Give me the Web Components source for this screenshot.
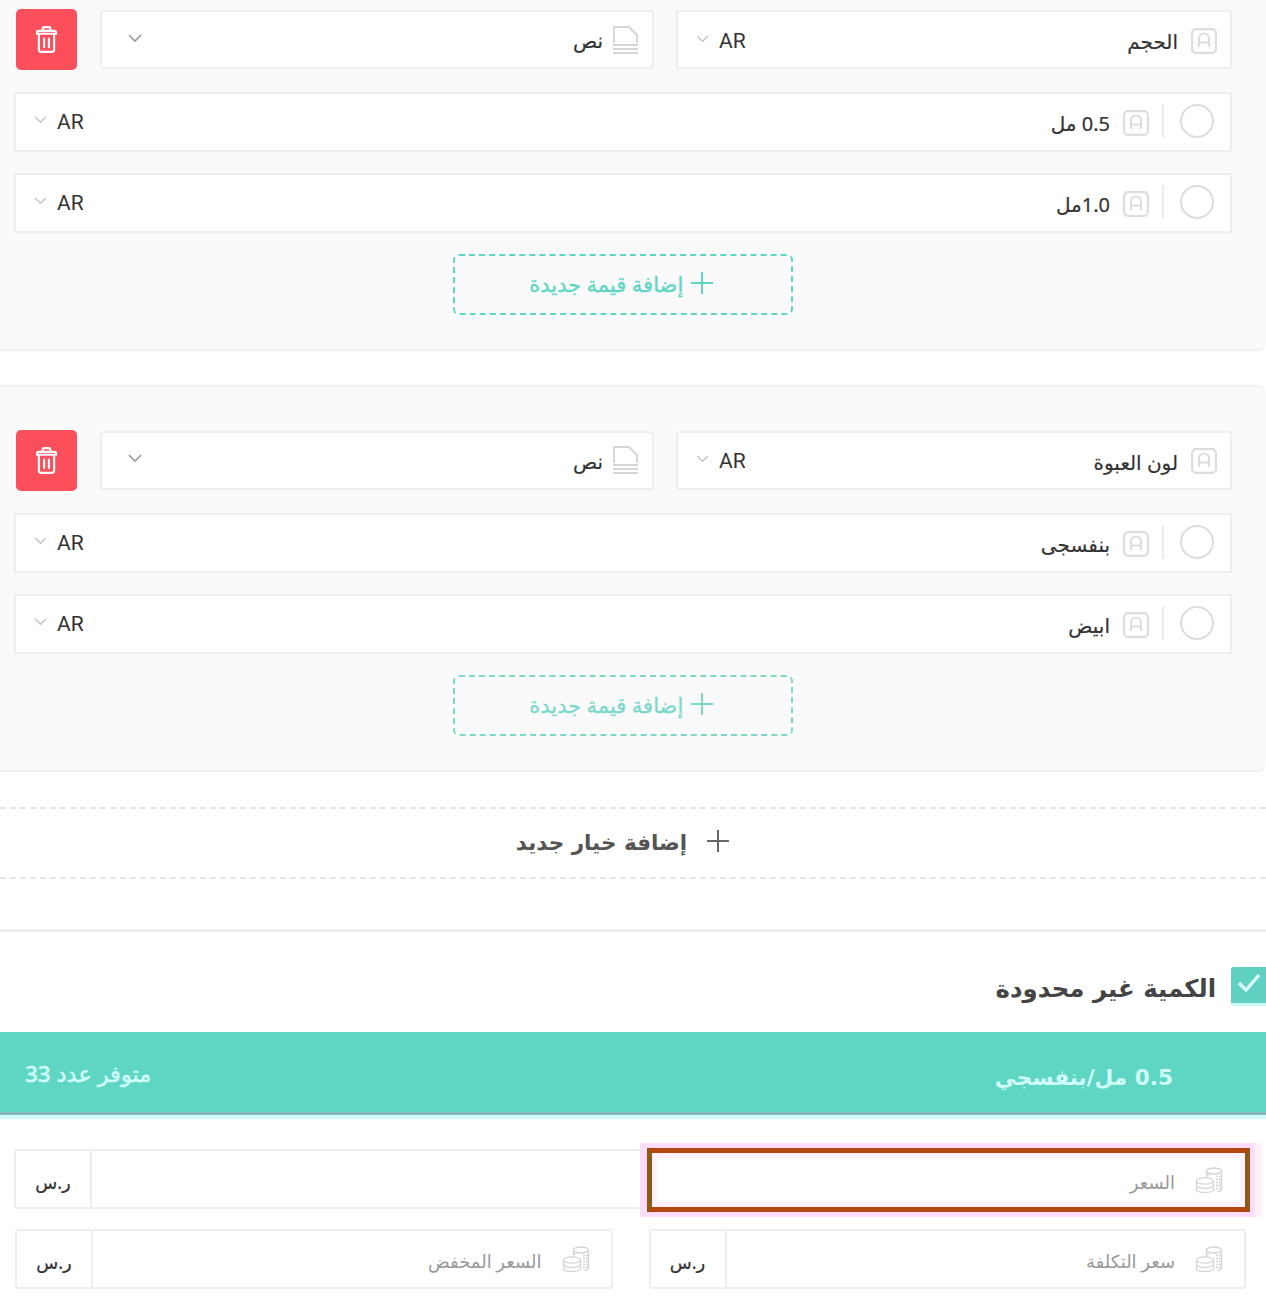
<!DOCTYPE html>
<html lang="ar" dir="rtl">
<head>
<meta charset="utf-8">
<title>خيارات المنتج</title>
<style>
  html, body { margin: 0; background: #fff; overflow: hidden; }
  body { font-family: "DejaVu Sans", "Noto Sans", sans-serif; color: #333; }
</style>
</head>
<body>
<product-options></product-options>

<script>
const FONT = `"Noto Sans", "DejaVu Sans", sans-serif`;
const HEAVY = `"DejaVu Sans", "Noto Sans", sans-serif`;
const LATIN = `Roboto, "Noto Sans", sans-serif`;

const ICONS = {
  letter: `<svg viewBox="0 0 26 26" fill="none" stroke="currentColor" stroke-width="2.200">
      <rect x="1.100" y="1.100" width="23.800" height="23.800" rx="4"/>
      <path d="M8 19V10.500a5 5 0 0 1 10 0V19M8 14.500h10"/></svg>`,
  file: `<svg viewBox="0 0 25 28" fill="none" stroke="currentColor" stroke-width="2">
      <path d="M1 17V1h15l8 8v8"/>
      <path d="M0 19h25M0 23h25M0 27h25"/></svg>`,
  chevron: `<svg viewBox="0 0 14 9" fill="none" stroke="currentColor" stroke-width="1.600">
      <path d="M1 1l6 6 6-6"/></svg>`,
  trash: `<svg viewBox="0 0 22 28" fill="none" stroke="currentColor" stroke-width="2.200" stroke-linecap="round" stroke-linejoin="round">
      <path d="M7 5V2.500A1.500 1.500 0 0 1 8.500 1h5A1.500 1.500 0 0 1 15 2.500V5"/>
      <path d="M1 6.500Q1 5 2.500 5h17Q21 5 21 6.500V8H1z"/>
      <path d="M3 8v16.500A2.500 2.500 0 0 0 5.500 27h11a2.500 2.500 0 0 0 2.500-2.500V8"/>
      <path d="M8.500 13v9M13.500 13v9"/></svg>`,
  plus: `<svg viewBox="0 0 22 22" fill="none" stroke="currentColor" stroke-width="2">
      <path d="M11 0v22M0 11h22"/></svg>`,
  check: `<svg viewBox="0 0 24 20" fill="none" stroke="currentColor" stroke-width="3.400">
      <path d="M2 10l7 7L22 2"/></svg>`,
  coins: `<svg viewBox="0 0 28 26" fill="none" stroke="currentColor" stroke-width="1.300">
      <ellipse cx="19" cy="4" rx="7.500" ry="3"/>
      <path d="M11.500 4v7M26.500 4v18q0 2-4 2.500M14 8.500q-1-.5-2.500-1"/>
      <path d="M21 9.500h5.500M21 12.500h5.500M21 15.500h5.500M21 18.500h5.500M21 21.500h5.500" stroke-dasharray="2 1"/>
      <ellipse cx="10" cy="14" rx="8.500" ry="3.200"/>
      <path d="M1.500 14v8.500c0 1.800 3.800 3 8.500 3s8.500-1.200 8.500-3V14"/>
      <path d="M1.500 18.300c0 1.800 3.800 3 8.500 3s8.500-1.200 8.500-3"/></svg>`
};

class UiIcon extends HTMLElement {
  constructor() {
    super();
    this.attachShadow({ mode: 'open' }).innerHTML = `
      <style>
        :host { display: block; flex: none; line-height: 0; }
        svg { display: block; width: 100%; height: 100%; }
      </style>${ICONS[this.getAttribute('name')] || ''}`;
  }
}

const baseText = `:host { font-family: ${FONT}; color: #333; }`;

// language picker on the far side of a white box
class LangSelect extends HTMLElement {
  constructor() {
    super();
    this.attachShadow({ mode: 'open' }).innerHTML = `
      <style>
        :host { display: flex; align-items: center; gap: 10px; flex: none; direction: rtl; }
        span { font: 400 21px ${LATIN}; color: #333; }
        ui-icon { width: 13px; height: 8px; color: #c4c4c4; margin-top: -4px; }
      </style>
      <span>AR</span><ui-icon name="chevron"></ui-icon>`;
  }
}

class NameField extends HTMLElement {
  constructor() {
    super();
    this.attachShadow({ mode: 'open' }).innerHTML = `
      <style>
        ${baseText}
        :host { flex: 1 1 400px; display: flex; align-items: center; box-sizing: border-box; height: 59px; margin-top: 1px;
          background: #fff; border: 2px solid #eee; border-radius: 3px; padding: 0 13px 0 18px; }
        ui-icon.letter { width: 26px; height: 26px; color: #ddd; margin-top: 2px; }
        .text { flex: 1; font-size: 20px; margin-right: 13px; padding-top: 4px; -webkit-text-stroke: .2px currentColor; }
        lang-select { margin-top: 2px; }
      </style>
      <ui-icon class="letter" name="letter"></ui-icon>
      <div class="text"><slot></slot></div>
      <lang-select></lang-select>`;
  }
}

class TypeSelect extends HTMLElement {
  constructor() {
    super();
    this.attachShadow({ mode: 'open' }).innerHTML = `
      <style>
        ${baseText}
        :host { flex: none; width: 554px; display: flex; align-items: center; box-sizing: border-box; height: 59px; margin-top: 1px;
          background: #fff; border: 2px solid #eee; border-radius: 4px; padding: 0 14px 0 26px; }
        ui-icon.file { width: 25px; height: 28px; color: #d6d6d6; }
        .text { flex: 1; font-size: 20px; margin-right: 10px; padding-top: 2px; -webkit-text-stroke: .2px currentColor; }
        ui-icon.chev { width: 14px; height: 9px; color: #9a9a9a; margin-top: -3px; }
      </style>
      <ui-icon class="file" name="file"></ui-icon>
      <div class="text"><slot></slot></div>
      <ui-icon class="chev" name="chevron"></ui-icon>`;
  }
}

class DeleteButton extends HTMLElement {
  constructor() {
    super();
    this.attachShadow({ mode: 'open' }).innerHTML = `
      <style>
        :host { flex: none; display: flex; align-items: center; justify-content: center; margin-right: 1px;
          width: 61px; height: 61px; background: #fb4f5c; border-radius: 5px; color: #fff; }
        ui-icon { width: 21px; height: 27px; }
      </style>
      <ui-icon name="trash"></ui-icon>`;
  }
}

class OptionValue extends HTMLElement {
  constructor() {
    super();
    this.attachShadow({ mode: 'open' }).innerHTML = `
      <style>
        ${baseText}
        :host { display: flex; align-items: center; box-sizing: border-box; height: 60px;
          background: #fff; border: 2px solid #eee; padding: 0 16px 0 18.500px; }
        .radio { width: 34px; height: 34px; box-sizing: border-box; border: 2px solid #ddd; border-radius: 50%; flex: none; margin-top: -2px; }
        .sep { width: 2px; height: 34px; background: #eee; margin: 0 16px 0 0; flex: none; margin-top: -2px; }
        ui-icon.letter { width: 26px; height: 26px; color: #ddd; margin: 2px 13px 0 13px; }
        .text { flex: 1; font-size: 20px; padding-top: 3px; -webkit-text-stroke: .2px currentColor; }
      </style>
      <div class="radio"></div>
      <div class="sep"></div>
      <ui-icon class="letter" name="letter"></ui-icon>
      <div class="text"><slot></slot></div>
      <lang-select></lang-select>`;
  }
}

class AddValue extends HTMLElement {
  constructor() {
    super();
    this.attachShadow({ mode: 'open' }).innerHTML = `
      <style>
        :host { align-self: center; display: flex; align-items: center; justify-content: center; gap: 8px;
          box-sizing: border-box; width: 340px; height: 61px; margin: .6px 0 0 1px; padding-right: 4px;
          border: 2px dashed #5fd5c4; border-radius: 6px;
          color: #5fd5c4; font: 500 21px ${FONT}; -webkit-text-stroke: .35px currentColor; }
        :host([dim]) { color: #7dd8cc; border-color: #7dd8cc; }
        ui-icon { width: 22px; height: 22px; margin-top: -2px; }
      </style>
      <ui-icon name="plus"></ui-icon><span><slot></slot></span>`;
  }
}

// one product option: header row, its values and the add button
class OptionCard extends HTMLElement {
  constructor() {
    super();
    this.attachShadow({ mode: 'open' }).innerHTML = `
      <style>
        :host { display: flex; flex-direction: column; gap: 20.800px; background: #fafafa;
          border-top: 2px solid #f0f0f0; border-bottom: 2px solid #f0f0f0;
          border-top-right-radius: 8px; border-bottom-right-radius: 8px;
          padding: 42.600px 34px 34.400px 13.500px; }
        :host([first]) { border-top: none; border-top-right-radius: 0; padding-top: 9px; }
        .head { display: flex; gap: 22px; align-items: flex-start; padding-left: 2.500px; margin-bottom: 1px; }
      </style>
      <div class="head">
        <name-field><slot name="name"></slot></name-field>
        <type-select>نص</type-select>
        <delete-button></delete-button>
      </div>
      <slot></slot>`;
  }
}

class AddOption extends HTMLElement {
  constructor() {
    super();
    this.attachShadow({ mode: 'open' }).innerHTML = `
      <style>
        :host { display: flex; align-items: center; justify-content: center; gap: 20px; box-sizing: border-box;
          height: 72px; margin-top: 34.500px; padding-right: 21px;
          border-top: 2px dashed #e6e6e6; border-bottom: 2px dashed #e6e6e6;
          color: #555; font: 700 21.500px ${HEAVY}; }
        ui-icon { width: 22px; height: 22px; margin-top: -4px; color: #666; }
      </style>
      <ui-icon name="plus"></ui-icon><span><slot></slot></span>`;
  }
}

class QuantityCheck extends HTMLElement {
  constructor() {
    super();
    this.attachShadow({ mode: 'open' }).innerHTML = `
      <style>
        :host { display: flex; align-items: center; gap: 15px; height: 39px; font: 700 24.400px ${HEAVY}; color: #444; }
        .box { width: 35px; height: 39px; box-sizing: border-box; flex: none; background: #5fd0c2;
          border-bottom: 3px solid #c8fbf4; border-top-left-radius: 3px; border-bottom-left-radius: 3px;
          display: flex; align-items: center; justify-content: center; color: #d9fffa; padding-bottom: 4px; }
        ui-icon { width: 24px; height: 20px; }
        span { padding-top: 4px; }
      </style>
      <div class="box"><ui-icon name="check"></ui-icon></div>
      <span><slot></slot></span>`;
  }
}

class VariantBar extends HTMLElement {
  constructor() {
    super();
    this.attachShadow({ mode: 'open' }).innerHTML = `
      <style>
        :host { display: flex; align-items: center; justify-content: space-between; box-sizing: border-box; height: 87px;
          background: #5fd5c4; border-bottom: 4px solid #d0fffa; box-shadow: inset 0 -3px 0 #86b8b8;
          padding: 0 93px 3px 25px; color: #d0fffa; }
        .name { font: 700 21.600px ${HEAVY}; padding-top: 11px; }
        .count { font: 500 22.500px ${FONT}; padding-top: 4px; -webkit-text-stroke: .5px currentColor; }
      </style>
      <div class="name"><slot name="name"></slot></div>
      <div class="count"><slot name="count"></slot></div>`;
  }
}

class PriceField extends HTMLElement {
  constructor() {
    super();
    this.attachShadow({ mode: 'open' }).innerHTML = `
      <style>
        :host { flex: none; display: flex; align-items: stretch; box-sizing: border-box; height: 60px;
          background: #fff; border: 2px solid #eee; border-radius: 3px; font-family: ${FONT}; }
        :host([half]) { flex: 1 1 400px; }
        .input { flex: 1; display: flex; align-items: center; gap: 20px; padding: 0 21px; color: #999; font-size: 18px; }
        .input span { padding-top: 5px; }
        ui-icon { width: 28px; height: 26px; color: #d4d4d4; }
        .unit { flex: none; width: 74px; border-right: 2px solid #eee; display: flex; align-items: center;
          justify-content: center; color: #333; font-size: 18px; padding-top: 6px; -webkit-text-stroke: .2px currentColor; }
      </style>
      <div class="input"><ui-icon name="coins"></ui-icon><span><slot></slot></span></div>
      <div class="unit">ر.س</div>`;
  }
}

class PricingForm extends HTMLElement {
  constructor() {
    super();
    this.attachShadow({ mode: 'open' }).innerHTML = `
      <style>
        :host { display: flex; flex-direction: column; gap: 20px; padding: 30px 20px 16px 14px; position: relative; }
        .pair { display: flex; gap: 36px; padding-left: 1px; }
        .hl { position: absolute; top: 29px; right: 16px; width: 603px; height: 64px; box-sizing: border-box;
          border: 5px solid #b5480f; border-left-color: #8c5a14; border-right-color: #8c5a14; background: #fff;
          box-shadow: 0 0 0 5px #fddcfb, -2px 0 0 5px #fddcfb, 7px 0 0 5px #fff0fe, inset 0 0 0 5px #fff2fe;
          display: flex; align-items: center; gap: 20px; padding: 0 22px; color: #999;
          font: 400 18px ${FONT}; }
        .hl ui-icon { width: 28px; height: 26px; color: #d4d4d4; }
        .hl span { padding-top: 4px; }
      </style>
      <price-field></price-field>
      <div class="hl"><ui-icon name="coins"></ui-icon><span>السعر</span></div>
      <div class="pair">
        <price-field half>سعر التكلفة</price-field>
        <price-field half>السعر المخفض</price-field>
      </div>`;
  }
}

class ProductOptions extends HTMLElement {
  constructor() {
    super();
    this.attachShadow({ mode: 'open' }).innerHTML = `
      <style>
        :host { display: block; width: 1266px; }
        .second { margin-top: 34px; }
        hr { border: 0; height: 3px; background: #eee; margin: 50px 0 35.500px; }
        .bar { margin-top: 25.500px; }
      </style>
      <option-card first>
        <span slot="name">الحجم</span>
        <option-value>0.5 مل</option-value>
        <option-value>1.0مل</option-value>
        <add-value>إضافة قيمة جديدة</add-value>
      </option-card>
      <option-card class="second">
        <span slot="name">لون العبوة</span>
        <option-value>بنفسجى</option-value>
        <option-value>ابيض</option-value>
        <add-value dim>إضافة قيمة جديدة</add-value>
      </option-card>
      <add-option>إضافة خيار جديد</add-option>
      <hr>
      <quantity-check>الكمية غير محدودة</quantity-check>
      <variant-bar class="bar">
        <span slot="name">0.5 مل/بنفسجي</span>
        <span slot="count">متوفر عدد 33</span>
      </variant-bar>
      <pricing-form></pricing-form>`;
  }
}

customElements.define('ui-icon', UiIcon);
customElements.define('lang-select', LangSelect);
customElements.define('name-field', NameField);
customElements.define('type-select', TypeSelect);
customElements.define('delete-button', DeleteButton);
customElements.define('option-value', OptionValue);
customElements.define('add-value', AddValue);
customElements.define('option-card', OptionCard);
customElements.define('add-option', AddOption);
customElements.define('quantity-check', QuantityCheck);
customElements.define('variant-bar', VariantBar);
customElements.define('price-field', PriceField);
customElements.define('pricing-form', PricingForm);
customElements.define('product-options', ProductOptions);
</script>
</body>
</html>
